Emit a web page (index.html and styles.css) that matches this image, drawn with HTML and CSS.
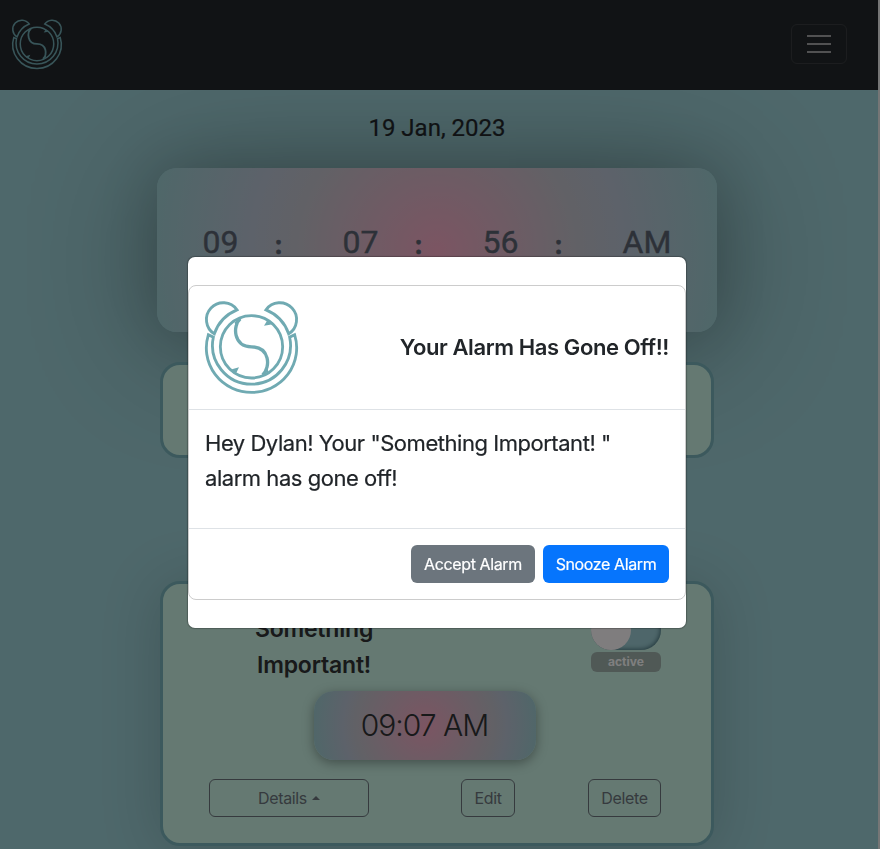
FILE: index.html
```html
<!DOCTYPE html>
<html lang="en">
<head>
<meta charset="utf-8">
<title>Alarm</title>
<link rel="stylesheet" href="styles.css">
</head>
<body>
<svg width="0" height="0" class="defs">
  <symbol id="logo" viewBox="45 50 279 275" overflow="visible">
    <g fill="none" stroke="#70aab2" stroke-width="8.5">
      <circle cx="184.500" cy="187" r="93.500"/>
      <path d="M55 151A135.500 133.500 0 1 0 314 151L299 158A117 117 0 1 1 70 158Z"/>
      <path d="M141 76A50.500 50.500 0 1 0 73 148A119 119 0 0 1 141 76Z"/>
      <path d="M228 76A50.500 50.500 0 1 1 296 148A119 119 0 0 0 228 76Z"/>
      <path stroke-width="10" d="M151 103C127 123 130 187 184.500 187S243 247 218 271"/>
    </g>
    <path fill="#70aab2" d="M128 116L158 99L144 112L136 124L134 113ZM241 258L211 275L225 262L233 250L235 261ZM222 124L233 106L252 116L240 121ZM147 248L137 269L118 257L131 253Z"/>
  </symbol>
</svg>
<div class="page">
  <header class="navbar">
    <svg class="brand"><use href="#logo"/></svg>
    <button class="toggler"><i></i><i></i><i></i></button>
  </header>
  <main class="content">
    <div class="date">19 Jan, 2023</div>
    <section class="clock">
      <span>09</span><b>:</b><span>07</span><b>:</b><span>56</span><b>:</b><span>AM</span>
    </section>
    <section class="card summary"></section>
    <section class="card alarm">
      <div class="alarm-top">
        <h3>Something<br>Important!</h3>
        <div class="status"><div class="switch"><i></i></div><div class="badge">active</div></div>
      </div>
      <div class="time">09:07 AM</div>
      <div class="actions">
        <button class="details">Details<i></i></button>
        <button class="edit">Edit</button>
        <button class="delete">Delete</button>
      </div>
    </section>
  </main>
</div>
<div class="backdrop">
  <div class="dialog">
    <div class="panel">
      <div class="modal-head"><svg class="modal-logo"><use href="#logo"/></svg><h2>Your Alarm Has Gone Off!!</h2></div>
      <div class="modal-body"><span>Hey Dylan! Your "Something Important! "</span><br><span>alarm has gone off!</span></div>
      <div class="modal-foot"><button class="accept">Accept Alarm</button><button class="snooze">Snooze Alarm</button></div>
    </div>
  </div>
</div>
<div class="scrollbar"></div>
</body>
</html>
```

FILE: styles.css
```css
* { box-sizing: border-box; }
html, body { height: 100%; overflow: hidden; }
body { margin: 0; font-family: Inter, sans-serif; color: #212529; background: #9dd0d6; }
button { font: inherit; margin: 0; padding: 0; white-space: nowrap; }
h2, h3 { margin: 0; }
.defs { display: block; position: absolute; }
.page { height: 849px; overflow: hidden; }
.navbar { height: 90px; background: #23272b; display: flex; justify-content: space-between; align-items: center; padding: 0 33px 2px 12px; position: relative; z-index: 1; }
.brand { width: 50px; height: 50px; overflow: visible; }
.toggler { width: 56px; height: 40px; border: 1px solid #383b3e; border-radius: 6px; background: none; display: flex; flex-direction: column; align-items: center; justify-content: center; gap: 6px; }
.toggler i { width: 24px; height: 2px; background: #a2a3a5; }
.content { width: 874px; display: flex; flex-direction: column; align-items: center; }
.date { font: 24px/36px Roboto, sans-serif; height: 78px; padding-top: 20px; position: relative; z-index: 1; color: #212529; -webkit-text-stroke: .2px #212529; }
.clock { width: 560px; height: 164px; border-radius: 20px; padding: 50px 0 0 45.5px; display: flex; background: radial-gradient(circle, #f7aac5 0%, #c3c3cc 48%, #bbc4d4 63%, #9dcfd3 100%); box-shadow: 0 10px 130px 0 rgba(0,0,0,.33), 0 0 60px rgba(0,0,0,.15); font: 32px/48px Roboto, sans-serif; color: #5a6270; -webkit-text-stroke: .4px #5a6270; }
.clock span { width: 70px; }
.clock b { width: 70px; padding-left: 2.5px; font: 700 25px/52px "Noto Sans", sans-serif; }
.card { width: 554px; border: 3px solid #78b2ba; border-radius: 20px; background: #caf2e4; position: relative; }
.summary { height: 96px; margin-top: 30px; }
.alarm { height: 265px; margin-top: 123px; padding: 31px 50px 0 46px; box-shadow: 0 4px 60px rgba(0,0,0,.17); }
.alarm-top { height: 76px; display: flex; justify-content: space-between; align-items: flex-start; }
h3 { width: 210px; text-align: center; font-size: 23px; line-height: 36px; font-weight: 600; margin-top: -4px; letter-spacing: -.2px; color: #303234; }
.status { width: 70px; margin-top: -5px; }
.switch { height: 40px; border-radius: 20px; background: #9ccdd4; box-shadow: inset -1px -1px 4px rgba(0,40,50,.5); }
.switch i { display: block; width: 40px; height: 40px; border-radius: 50%; background: #fffbfc; }
.badge { margin-top: 2px; height: 20px; border-radius: 6px; background: #a1b2ad; color: #fff; font-size: 12px; line-height: 19px; font-weight: 700; text-align: center; }
.time { width: 222px; height: 69px; margin-left: 104.5px; border-radius: 20px; text-align: center; font-size: 30px; font-weight: 300; line-height: 69px; letter-spacing: -1px; color: #303234; background: radial-gradient(circle, #f7aac5 0%, #c3c3cc 60%, #bbc4d4 70%, #9dcfd3 100%); box-shadow: 0 3px 12px rgba(0,0,0,.35); }
.actions { display: flex; margin-top: 19px; }
.actions button { height: 38px; border: 1px solid #6c757d; border-radius: 6px; background: none; color: #6c757d; font-size: 16px; letter-spacing: -.35px; }
.details { width: 160px; }
.details i { display: inline-block; margin-left: 5px; vertical-align: 4px; border: 4px solid transparent; border-top: 0; border-bottom-color: #6c757d; }
.edit { width: 54px; margin-left: 92px; }
.delete { width: 73px; margin-left: 73px; }
.backdrop { position: fixed; z-index: 10; inset: 0; background: rgba(0,0,0,.5); }
.dialog { width: 498px; height: 371px; margin: 257px 0 0 188px; border-radius: 7px; background: #fff; padding-top: 28px; box-shadow: 0 0 1px 1px rgba(0,0,0,.25); }
.panel { height: 315px; border: 1px solid #ccc; border-radius: 8px; }
.modal-head { height: 124px; border-bottom: 1px solid #dee2e6; padding: 0 16px 2px; display: flex; align-items: center; justify-content: space-between; }
.modal-logo { width: 93px; height: 92px; overflow: visible; }
h2 { font-size: 22px; font-weight: 600; letter-spacing: -.4px; white-space: nowrap; }
.modal-body { height: 119px; padding: 16px; border-bottom: 1px solid #dee2e6; font-size: 22px; line-height: 35px; letter-spacing: -.46px; white-space: nowrap; -webkit-text-stroke: .2px #212529; }
.modal-foot { padding: 16px; display: flex; justify-content: flex-end; gap: 8px; }
.modal-foot button { height: 38px; border: 0; border-radius: 6px; color: #fff; font-size: 16px; letter-spacing: -.38px; -webkit-text-stroke: .2px #fff; }
.accept { width: 124px; background: #6c757d; }
.snooze { width: 126px; background: #0675fd; }
.scrollbar { position: fixed; z-index: 11; top: 0; right: 0; width: 2px; height: 100%; background: #767676; }
```
